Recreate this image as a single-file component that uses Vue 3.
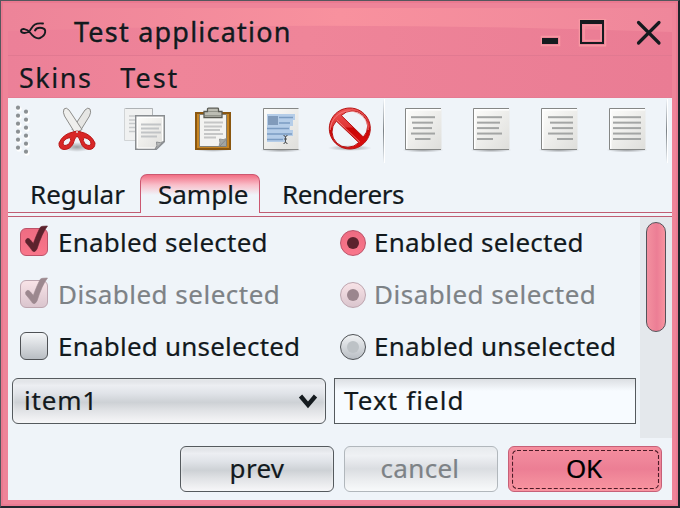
<script setup>
const aligns = [
  { name: 'center', lines: [[6, 24], [7, 21], [8, 19], [6, 24], [10, 15.5]] },
  { name: 'left', lines: [[4, 25], [4, 23], [4, 22], [4, 25], [4, 16]] },
  { name: 'right', lines: [[7, 25], [9, 23], [11, 21], [7, 25], [16, 16]] },
  { name: 'fill', lines: [[4, 28], [4, 28], [4, 28], [4, 28], [4, 28]] },
]
const rows = [
  { text: 'Enabled selected', state: 'on' },
  { text: 'Disabled selected', state: 'dis' },
  { text: 'Enabled unselected', state: 'off' },
]
const dots = [0, 1, 2, 3, 4, 5]
</script>

<template>
  <div class="window">
    <header class="titlebar">
      <svg class="backdrop" width="664" height="48" viewBox="0 0 664 48">
        <defs>
          <linearGradient id="shine" x1="0" x2="1">
            <stop offset="0" stop-color="#ed8499" /><stop offset=".5" stop-color="#f8919e" />
            <stop offset="1" stop-color="#ef879b" />
          </linearGradient>
        </defs>
        <path d="M0 0H664V24Q330 12 0 23Z" fill="url(#shine)" />
        <path d="M0 47.5H664" stroke="#e17991" />
      </svg>
      <svg class="logo" width="28" height="20" viewBox="0 0 28 20" fill="none" stroke="#151b1f" stroke-width="1.9" stroke-linecap="round">
        <path d="M24 2.500C15 1.500 14 5 11 9.500C8 13 2.500 12.500 2 10C2 7 8 7.500 11 11.500C14 15.500 17 18.500 21 17C27 14.500 28 8 23 7C20 6.500 17 7.500 16 9.500" />
      </svg>
      <span class="title">Test application</span>
      <svg class="controls" width="126" height="30" viewBox="0 0 126 30">
        <g fill="none" stroke="#f797a2" stroke-width="1.5"><path d="M1.500 17.500h18v9h-18zM39.500 .8h26v26h-26zM44 6.500h17v15H44z" /></g>
        <path d="M2 19h16v6H2z" fill="#151b1f" />
        <path d="M40 1h24v24H40zM42 5v18h20V5z" fill="#151b1f" fill-rule="evenodd" />
        <path d="M98.500 3.500L119 24M119 3.500L98.500 24" stroke="#151b1f" stroke-width="3.2" stroke-linecap="round" />
      </svg>
    </header>
    <nav class="menubar"><span class="m1">Skins</span><span class="m2">Test</span></nav>

    <div class="toolbar">
      <svg class="grip" width="16" height="52" viewBox="0 0 16 52">
        <g v-for="d in dots" :key="d">
          <circle cx="5" :cy="5 + d * 8" r="2.600" fill="#fff" /><circle cx="13" :cy="9 + d * 8" r="2.600" fill="#fff" />
          <circle cx="4" :cy="3.700 + d * 8" r="2.100" fill="#8b9093" /><circle cx="12" :cy="7.700 + d * 8" r="2.100" fill="#8b9093" />
        </g>
      </svg>
      <svg class="icon" width="48" height="48" viewBox="0 0 48 48">
        <defs>
          <radialGradient id="shadow"><stop offset="0" stop-opacity=".35" /><stop offset="1" stop-opacity="0" /></radialGradient>
          <linearGradient id="paper" x1="0" y1="0" x2="1" y2="1"><stop offset="0" stop-color="#fdfdfb" /><stop offset="1" stop-color="#dededb" /></linearGradient>
          <linearGradient id="red" x1="0" y1="0" x2="0" y2="1"><stop offset="0" stop-color="#ee5555" /><stop offset=".45" stop-color="#e03535" /><stop offset=".5" stop-color="#c90505" /><stop offset="1" stop-color="#de1010" /></linearGradient>
        </defs>
        <ellipse cx="24" cy="41" rx="15" ry="5" fill="url(#shadow)" />
        <path d="M32 4Q35 .8 37 3Q38.500 6 36.500 10L26 27L19 23.500Z" fill="#e6e6e4" stroke="#8d8d8b" stroke-width="1" />
        <path d="M16 4Q13 .8 11 3Q9.500 6 11.500 10L22 27L29 23.500Z" fill="#efefed" stroke="#8d8d8b" stroke-width="1" />
        <path d="M24 25L20 26Q10 28 6 37Q5.500 43 11 43.500Q17 43.500 20 38Q21.500 32 24 30Q26.500 32 28 37Q30 43 36.500 43.500Q42 43 42 37Q38 28 28 26ZM17 31.500Q19 34 16 38Q11 41 10 38Q10 33 17 31.500M31 31.500Q38 33 38 38Q37 41 32 38Q29 34 31 31.500" fill="#d92727" stroke="#b91616" stroke-width="1" fill-rule="evenodd" />
        <circle cx="24" cy="26" r="1" fill="#ddd" />
      </svg>
      <svg class="icon" width="48" height="48" viewBox="0 0 48 48">
        <g transform="translate(-1 0)">
          <path d="M4.500 2.500h28v32h-28z" fill="#f0f1f1" stroke="#d1d4d6" />
          <path d="M32.500 2.500v7M32.500 2.500h-27" stroke="#aeb2b5" />
          <path d="M9 10h12M9 14h12M9 17.500h12M9 21.500h12M9 25.500h6" stroke="#c7cacc" stroke-width="1.700" />
          <path d="M15.700 9.700h28.600v26l-8 7.600H15.700z" fill="url(#paper)" stroke="#898d91" stroke-width="1.400" />
          <path d="M17.500 11.500h25v24.500l-6.500 6H17.500z" fill="none" stroke="#fff" />
          <path d="M35 43q3-3 1.500-7q4 2 8-1z" fill="#b9bbbb" stroke="#8b8e91" />
          <path d="M21 18.500h20M21 22.500h18M21 26.500h20M21 30.500h16" stroke="#c1c4c6" stroke-width="1.800" />
        </g>
      </svg>
      <svg class="icon" width="48" height="48" viewBox="0 0 48 48">
        <ellipse cx="24" cy="43.500" rx="18" ry="2.500" fill="url(#shadow)" />
        <path d="M7 7h34v36H7z" fill="#c88522" stroke="#8a5711" stroke-width="2" />
        <path d="M10.500 8.500h27v32h-27z" fill="#f3f3f1" stroke="#858074" />
        <path d="M30 40.500q1.500-4 .5-7.500q4 1.500 7-.5v.5l-7 7.500z" fill="#a5a8a6" stroke="#858886" stroke-width=".8" />
        <path d="M37.500 33v7.500H30z" fill="#7d8180" opacity=".7" />
        <path d="M15 16.500h19M15 20.500h18M15 24h16M15 28h19M15 31.500h12" stroke="#c5c6c6" stroke-width="1.800" />
        <path d="M18.500 3q0-.8 1-.8h9q1 0 1 .8v2.500h3.500v6h-18v-6h3.500z" fill="#bcbdb4" stroke="#5a5b54" stroke-width="1.300" />
        <path d="M19 5.500h10M16 9.500h16" stroke="#92948b" />
      </svg>
      <svg class="icon" width="48" height="48" viewBox="0 0 48 48">
        <ellipse cx="24" cy="44" rx="21" ry="2.500" fill="url(#shadow)" />
        <path d="M6.500 2.500h35v41h-35z" fill="url(#paper)" />
        <path d="M41.500 2.500h-35v41h35" fill="none" stroke="#858786" />
        <path d="M10 8h28v6h-2v6h-3v4h3v6h-7v6H10z" fill="#b5cde8" />
        <path d="M11 10h10v9H11z" fill="#819bbb" />
        <path d="M22 11.500h14M22 17h11M10 22.500h22M10 28h25M10 33.500h16" stroke="#7b9cc2" stroke-width="1.600" />
        <path d="M26.500 29.500q2 0 2 2v4q0 2-2 2M30.500 29.500q-2 0-2 2v4q0 2 2 2M27 33h3" fill="none" stroke="#4d5155" stroke-width="1" />
      </svg>
      <svg class="icon" width="48" height="48" viewBox="0 0 48 48">
        <g transform="translate(.8 0)">
          <ellipse cx="24" cy="42" rx="22" ry="3" fill="url(#shadow)" />
          <path fill-rule="evenodd" d="M24 2a20.500 20.500 0 1 0 .01 0M15.500 9.500L37.500 31A15 15 0 0 0 15.500 9.500M10.500 15A15 15 0 0 0 33 36.500Z" fill="url(#red)" stroke="#b61414" />
          <path d="M4.500 24a18.800 18.800 0 0 1 38 0M11 14L34 36" fill="none" stroke="#f68a8a" opacity=".75" />
        </g>
      </svg>
      <i class="sep s1"></i>
      <svg v-for="a in aligns" :key="a.name" class="page" width="42" height="48" viewBox="0 0 42 48">
        <ellipse cx="20" cy="44" rx="21" ry="2.500" fill="url(#shadow)" />
        <path d="M2.500 2.500h36v41h-36z" fill="url(#paper)" />
        <path d="M3.700 43V3.700H38" fill="none" stroke="#fff" stroke-width="1.500" />
        <path d="M38 2.500H2.500v41H38" fill="none" stroke="#858786" />
        <path v-for="(l, n) in a.lines" :key="n" :d="`M${l[0] + 2} ${11.200 + n * 5.450}h${l[1]}`" stroke="#a3a5a4" stroke-width="2" />
      </svg>
      <i class="sep s2"></i>
    </div>

    <div class="tabs">
      <span class="tab regular"><b>Regular</b></span>
      <span class="tab active"><b>Sample</b></span>
      <span class="tab renderers"><b>Renderers</b></span>
    </div>

    <main class="panel">
      <section class="form">
        <template v-for="(r, i) in rows" :key="i">
          <label class="choice" :class="r.state">
            <span class="check">
              <svg v-if="r.state !== 'off'" width="28" height="31" viewBox="0 0 28 31">
                <path d="M5.500 15.500Q7.500 11.500 10.500 15L13.300 18.500Q17.500 7 20.500 2Q21.500 1 27.500 1Q22 8 17 24Q15 28 12.500 26Q10.500 23 5.800 17.500Z" stroke-width=".6" />
              </svg>
            </span><span class="label">{{ r.text }}</span>
          </label>
          <label class="choice second" :class="r.state">
            <span class="radio"><i></i></span><span class="label">{{ r.text }}</span>
          </label>
        </template>
        <div class="combo"><span>item1</span>
          <svg width="20" height="16" viewBox="0 0 20 16"><path d="M2.500 3L10 12L17.500 3" fill="none" stroke="#151b1f" stroke-width="4.300" /></svg>
        </div>
        <div class="field">Text field</div>
      </section>
      <aside class="scroll"><div class="thumb"></div></aside>
    </main>

    <footer class="actions">
      <button class="prev">prev</button>
      <button class="cancel">cancel</button>
      <button class="ok"><span>OK</span>
        <svg class="focus" width="148" height="40" viewBox="0 0 148 40"><rect x=".5" y=".5" width="146" height="38" rx="4.500" /></svg>
      </button>
    </footer>
  </div>
</template>

<style>
body { margin: 0; background: #20272c; overflow: hidden; }
</style>
<style scoped>
* { box-sizing: border-box; }
.window {
  width: 680px; height: 508px; padding: 7px 6px 6px 7px; overflow: hidden;
  border: solid; border-width: 1px 2px 2px 1px; border-color: #55575d #1e242a #22272e #55575d;
  background: #ee8499; box-shadow: inset 2px 2px #ea7990, inset -2px -2px #e97b92;
  font: 26px/30px "Noto Sans", sans-serif; color: #12191d; white-space: nowrap;
  -webkit-text-stroke: .2px;
}
.titlebar { position: relative; height: 48px; display: flex; align-items: center; background: linear-gradient(90deg, #ec8098, #ef8599 45%, #ea7c94); }
.backdrop { position: absolute; left: 0; top: 0; }
.logo { position: relative; margin: -3px 0 0 11px; }
.title { position: relative; margin: 0 0 0 27px; font-size: 27px; letter-spacing: 1.22px; -webkit-text-stroke: .4px; text-shadow: 0 0 2px #f8a2ae; }
.controls { position: relative; margin: 3px 6px 0 auto; }
.menubar { height: 42px; display: flex; align-items: center; padding: 2px 0 0 11px; gap: 28px; font-size: 27px; background: linear-gradient(90deg, #ec8098, #ef8599 25%, #ea7c94); border-bottom: 1px solid #e57b92; }
.m1 { letter-spacing: 1.5px; }
.m2 { letter-spacing: 2px; }
.toolbar { height: 68px; display: flex; align-items: flex-start; background: #eff4f9; }
.grip { margin: 6px 0 0 6px; }
.icon { flex: none; margin: 8px 0 0 20px; }
.grip + .icon { margin-left: 23px; }
.sep { width: 2px; height: 64px; margin-top: 1px; flex: none; border-right: 1px solid #fff; background: linear-gradient(#eff4f9, #7b8287 50%, #eff4f9); }
.s1 { margin-left: 10px; }
.page { flex: none; margin: 8px 0 0 26px; }
.s1 + .page { margin-left: 18px; }
.s2 { margin-left: 17px; }
.tabs { height: 51px; display: flex; align-items: flex-end; padding: 8px 0 4px; background: linear-gradient(#c05d73, #c05d73) 0 50px / 100% 1px no-repeat, #eff4f9; }
.tab b { font-weight: normal; }
.tab { height: 39px; display: flex; align-items: center; border-bottom: 1px solid #c05d73; padding-top: 2px; }
.regular { width: 132px; padding-left: 22px; letter-spacing: 0; }
.active { width: 120px; padding-left: 17px; border: 1px solid #cc5871; border-bottom: 0; border-radius: 7px 7px 0 0; background: linear-gradient(#f16e84, #f9bfca 10px, #eff4f9 20px); padding-top: 0; }
.renderers { flex: 1; padding-left: 22px; letter-spacing: -.4px; }
.panel { height: 221px; display: flex; background: #eff4f9; }
.form { width: 632px; display: grid; grid-template-columns: 320px 1fr; grid-template-rows: 52px 52px 57px 46px; }
.choice { height: 50px; display: flex; align-items: center; padding-left: 12px; }
.check { position: relative; width: 28px; height: 28px; border: 1px solid #4e5155; border-radius: 6px; background: linear-gradient(#f4f6f8, #b8bdc3); }
.check svg { position: absolute; left: -1px; top: -4px; fill: #5c222d; stroke: #5c222d; }
.label { margin-left: 10px; letter-spacing: .22px; }
.radio { width: 26px; height: 26px; display: grid; place-items: center; border: 1px solid #4e5155; border-radius: 50%; background: linear-gradient(#f0f2f4, #b9bec4); margin-top: 2px; }
.radio i { width: 12px; height: 12px; border-radius: 50%; background: #bdc2c6; }
.on .check, .on .radio { border-color: #bc5269; background: linear-gradient(#ee6c82, #f9768b); }
.on .radio i { background: #5c222d; }
.dis .check, .dis .radio { border-color: #bda5af; background: linear-gradient(#f8e3e7, #dac5ce); }
.dis .radio i { background: #9b868e; }
.dis .check svg { fill: #9c888f; stroke: #9c888f; }
.dis .label { color: #7d8286; letter-spacing: .5px; }
.second .label { margin-left: 8px; }
.combo { margin-left: 4px; width: 314px; height: 46px; border: 1px solid #555a5e; border-radius: 6px; display: flex; align-items: center; justify-content: space-between; padding: 0 7px 2px 11px; letter-spacing: .8px; }
.combo, .prev { background: linear-gradient(#dcdfe3, #eceef2 15%, #e0e3e8 33%, #cdd1d5 53%, #dfe1e4 70%, #f7f7f9); box-shadow: inset 0 0 3px #f4f5f7; }
.combo svg { margin-top: 2px; }
.field { margin-left: 6px; width: 302px; height: 46px; border: 1px solid #555a5e; padding: 6px 9px; letter-spacing: 1.1px; background: linear-gradient(#dcdfe3, #f7fbff 12px); }
.scroll { width: 32px; height: 221px; padding: 5px 6px; background: #e4e8ec; }
.thumb { width: 20px; height: 110px; border: 1px solid #555259; border-radius: 10px; background: linear-gradient(90deg, #f3909f, #ec7e95 55%, #f7939f); }
.actions { height: 62px; display: flex; justify-content: flex-end; gap: 10px; padding: 8px 10px 0 0; background: #eff4f9; }
button { position: relative; width: 154px; height: 46px; padding: 0 0 2px; border: 1px solid #555a5e; border-radius: 6px; font: inherit; color: #12191d; letter-spacing: .3px; }
button.cancel { padding-right: 2px; border-color: #b1b7bc; color: #7d8286; background: linear-gradient(#e7eaed, #eff1f4 20%, #dadde1 50%, #ebedef 75%, #f8fafb); }
button.ok { padding-right: 2px; border-color: #c76078; color: #000; letter-spacing: -.3px; background: linear-gradient(#f58d9d, #ef8599 32%, #ec7e94 50%, #f28b9b 75%, #f994a0); }
.focus { position: absolute; left: 3px; top: 3px; fill: none; stroke: #4c1b27; stroke-width: 1.100; stroke-dasharray: 4 2; }
</style>
